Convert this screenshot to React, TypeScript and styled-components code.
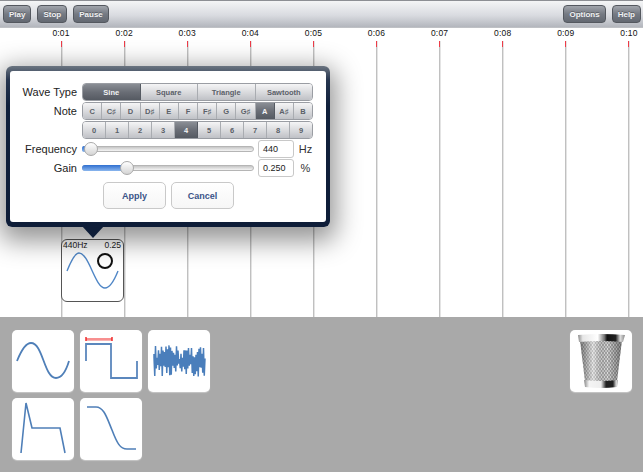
import React from "react"
import styled, { createGlobalStyle, css } from "styled-components"

const GlobalStyle = createGlobalStyle`
  html, body {
    margin: 0;
    padding: 0;
    background: #fff;
  }
  body {
    font-family: "Liberation Sans", Arial, sans-serif;
  }
`

const WAVES = ["Sine", "Square", "Triangle", "Sawtooth"]
const NOTES = ["C", "C♯", "D", "D♯", "E", "F", "F♯", "G", "G♯", "A", "A♯", "B"]
const OCTAVES = ["0", "1", "2", "3", "4", "5", "6", "7", "8", "9"]
const TIMES = ["0:01", "0:02", "0:03", "0:04", "0:05", "0:06", "0:07", "0:08", "0:09", "0:10"]

// noisy band for the third palette tile, fixed seed so the picture never changes
const noisePath = () => {
  let seed = 17
  const rnd = () => {
    seed = (seed * 9301 + 49297) % 233280
    return seed / 233280
  }
  let d = "M6 24"
  let top = true
  for (let x = 6; x <= 57; x += 0.75) {
    const y = top ? 15 + rnd() * 14 : 33 + rnd() * 14
    d += ` L${x.toFixed(2)} ${y.toFixed(1)}`
    top = !top
  }
  return d
}

const TrashIcon = () => (
  <svg width="50" height="56" viewBox="0 0 50 56">
    <defs>
      <linearGradient id="rim" x1="0" x2="1" y1="0" y2="0">
        <stop offset="0" stopColor="#8a8a8a" />
        <stop offset="0.1" stopColor="#e6e6e6" />
        <stop offset="0.42" stopColor="#fff" />
        <stop offset="0.56" stopColor="#777" />
        <stop offset="0.62" stopColor="#111" />
        <stop offset="0.8" stopColor="#222" />
        <stop offset="0.9" stopColor="#ddd" />
        <stop offset="1" stopColor="#888" />
      </linearGradient>
      <linearGradient id="foot" x1="0" x2="1" y1="0" y2="0">
        <stop offset="0" stopColor="#888" />
        <stop offset="0.15" stopColor="#f4f4f4" />
        <stop offset="0.5" stopColor="#eee" />
        <stop offset="0.65" stopColor="#222" />
        <stop offset="0.85" stopColor="#222" />
        <stop offset="0.95" stopColor="#ddd" />
        <stop offset="1" stopColor="#999" />
      </linearGradient>
      <linearGradient id="shade" x1="0" x2="1" y1="0" y2="0">
        <stop offset="0" stopColor="#000" stopOpacity="0.4" />
        <stop offset="0.32" stopColor="#fff" stopOpacity="0.4" />
        <stop offset="0.65" stopColor="#000" stopOpacity="0.02" />
        <stop offset="1" stopColor="#000" stopOpacity="0.4" />
      </linearGradient>
      <pattern id="mesh" width="3" height="4" patternUnits="userSpaceOnUse">
        <rect width="3" height="4" fill="#e2e2e2" />
        <path d="M0 0 L3 4 M3 0 L0 4" stroke="#808080" strokeWidth="0.7" />
      </pattern>
    </defs>
    <path d="M4 7 L46 7 L41 48 L9 48 Z" fill="url(#mesh)" />
    <path d="M4 7 L46 7 L41 48 L9 48 Z" fill="url(#shade)" />
    <path d="M2 2 Q25 0 49 2 L47 9 Q25 7 3 9 Z" fill="url(#rim)" />
    <path d="M8 47 Q25 49 42 47 L41 54 Q25 56 9 54 Z" fill="url(#foot)" />
  </svg>
)

export default function App() {
  return (
    <>
      <GlobalStyle />
      <Page>
        <Toolbar>
          <ToolGroup>
            <ToolButton>Play</ToolButton>
            <ToolButton>Stop</ToolButton>
            <ToolButton>Pause</ToolButton>
          </ToolGroup>
          <ToolGroup>
            <ToolButton>Options</ToolButton>
            <ToolButton>Help</ToolButton>
          </ToolGroup>
        </Toolbar>

        <Timeline>
          {TIMES.map((t) => (
            <Tick key={t}>
              <TickLabel>{t}</TickLabel>
              <TickLine />
            </Tick>
          ))}

          <Clip>
            <ClipHead>
              <span>440Hz</span>
              <span>0.25</span>
            </ClipHead>
            <ClipWave width="60" height="46" viewBox="0 0 60 46">
              <path d="M5 20 C 9 10 13 2 17 2 C 27 2 33 37 43 37 C 48 37 52 30 56 20" fill="none" stroke="#4f86c6" strokeWidth="1.4" />
            </ClipWave>
            <ClipHandle />
          </Clip>

          <Popover>
            <PopoverBody>
              <FormRow>
                <RowLabel>Wave Type</RowLabel>
                <Segments>
                  {WAVES.map((w) => (
                    <Segment key={w} $selected={w === "Sine"}>{w}</Segment>
                  ))}
                </Segments>
              </FormRow>
              <FormRow>
                <RowLabel>Note</RowLabel>
                <Segments>
                  {NOTES.map((n) => (
                    <Segment key={n} $selected={n === "A"}>{n}</Segment>
                  ))}
                </Segments>
              </FormRow>
              <FormRow>
                <RowLabel />
                <Segments>
                  {OCTAVES.map((o) => (
                    <Segment key={o} $selected={o === "4"}>{o}</Segment>
                  ))}
                </Segments>
              </FormRow>
              <FormRow>
                <RowLabel>Frequency</RowLabel>
                <Slider>
                  <SliderFill style={{ width: 4 }} />
                  <SliderKnob style={{ left: 1 }} />
                </Slider>
                <ValueBox>440</ValueBox>
                <Unit>Hz</Unit>
              </FormRow>
              <FormRow>
                <RowLabel>Gain</RowLabel>
                <Slider>
                  <SliderFill style={{ width: 42 }} />
                  <SliderKnob style={{ left: 37 }} />
                </Slider>
                <ValueBox>0.250</ValueBox>
                <Unit>%</Unit>
              </FormRow>
              <Actions>
                <ActionButton>Apply</ActionButton>
                <ActionButton>Cancel</ActionButton>
              </Actions>
            </PopoverBody>
            <Arrow />
          </Popover>
        </Timeline>

        <Palette>
          <PaletteGrid>
            <Tile>
              <TileArt viewBox="0 0 62 62">
                <path d="M5 31 C 9 21 14 13 19 13 C 31 13 32 48 44 48 C 50 48 54 41 57 31" fill="none" stroke="#4f7fb8" strokeWidth="1.8" />
              </TileArt>
            </Tile>
            <Tile>
              <TileArt viewBox="0 0 62 62">
                <path d="M6 31 V14 H31 V48 H57 V31" fill="none" stroke="#5b87bd" strokeWidth="1.8" />
                <path d="M6 10.5 H32" stroke="#f8b4b4" strokeWidth="1" />
                <path d="M6 9 H32" stroke="#f02020" strokeWidth="1" />
                <path d="M6 7 V11 M32 7 V11" stroke="#f02020" strokeWidth="1.4" />
              </TileArt>
            </Tile>
            <Tile>
              <TileArt viewBox="0 0 62 62">
                <path d={noisePath()} fill="none" stroke="#4a7ebb" strokeWidth="1.5" />
              </TileArt>
            </Tile>
            <Tile>
              <TileArt viewBox="0 0 62 62">
                <path d="M9 55 L14 5 L20 30 H48 L53 55" fill="none" stroke="#4f7fb8" strokeWidth="1.6" />
              </TileArt>
            </Tile>
            <Tile>
              <TileArt viewBox="0 0 62 62">
                <path d="M7 9 H16 C 24 9 27 20 32 32 C 37 45 40 51 47 51 H56" fill="none" stroke="#4f7fb8" strokeWidth="1.6" />
              </TileArt>
            </Tile>
          </PaletteGrid>
          <Tile>
            <TrashIcon />
          </Tile>
        </Palette>
      </Page>
    </>
  )
}

const Page = styled.div`
  width: 643px;
  height: 472px;
  display: flex;
  flex-direction: column;
  overflow: hidden;
`

const Toolbar = styled.div`
  height: 28px;
  flex: none;
  box-sizing: border-box;
  display: flex;
  justify-content: space-between;
  align-items: center;
  padding: 0 2px 0 3px;
  border-top: 1px solid #8d8f94;
  border-bottom: 1px solid #bfc1c5;
  background: linear-gradient(#f4f5f6, #d9dbe0 55%, #b3b6bd);
`

const ToolGroup = styled.div`
  display: flex;
  gap: 6px;
`

const ToolButton = styled.button`
  height: 18px;
  padding: 0 5px;
  border: 1px solid #54585f;
  border-radius: 4px;
  background: linear-gradient(#a1a5ac, #757a83 50%, #636871);
  color: #f0f1f3;
  font: bold 8px "Liberation Sans", Arial, sans-serif;
  text-shadow: 0 -1px 0 rgba(0, 0, 0, 0.3);
`

const Timeline = styled.div`
  position: relative;
  flex: 1;
  display: flex;
  padding-left: 29.5px;
  background: #fff;
`

const Tick = styled.div`
  flex: none;
  width: 63.1px;
  display: flex;
  flex-direction: column;
  align-items: center;
`

const TickLabel = styled.div`
  height: 13px;
  font: 8.5px/11px "Liberation Sans", Arial, sans-serif;
  letter-spacing: 0.2px;
  color: #111;
`

const TickLine = styled.div`
  flex: 1;
  width: 1px;
  background: linear-gradient(#ee3b47 0, #ee3b47 6px, #c0c0c0 6px);
  box-shadow: 1px 0 0 #e4e4e4;
`

const Popover = styled.div`
  position: absolute;
  left: 6px;
  top: 38px;
  width: 324px;
  height: 161px;
  box-sizing: border-box;
  padding: 5px 4px;
  border-radius: 6px;
  background: linear-gradient(#6b7580, #27364f 14px, #10203b 40px, #0e1d38);
  box-shadow: 0 8px 26px 6px rgba(0, 0, 0, 0.42);
`

const Arrow = styled.div`
  position: absolute;
  left: 76px;
  top: 160px;
  width: 0;
  height: 0;
  border-left: 11.5px solid transparent;
  border-right: 11.5px solid transparent;
  border-top: 12px solid #0e1d38;
`

const PopoverBody = styled.div`
  height: 100%;
  box-sizing: border-box;
  padding: 12px 13px 0 0;
  border-radius: 3px;
  background: #fff;
  display: flex;
  flex-direction: column;
  gap: 1px;
`

const FormRow = styled.div`
  display: flex;
  align-items: center;
  height: 18px;
`

const RowLabel = styled.div`
  flex: none;
  width: 67px;
  margin-right: 5px;
  text-align: right;
  font-size: 11px;
  color: #222;
`

const Segments = styled.div`
  flex: 1;
  height: 18px;
  display: flex;
  overflow: hidden;
  border: 1px solid #9a9da3;
  border-radius: 4px;
  box-sizing: border-box;
`

const Segment = styled.div<{ $selected?: boolean }>`
  flex: 1 1 0;
  display: flex;
  align-items: center;
  justify-content: center;
  font-size: 7.5px;
  font-weight: bold;
  color: #5a6068;
  background: linear-gradient(#f5f5f6, #d8d9dc 55%, #bfc1c6);
  border-right: 1px solid #a9acb1;
  &:last-child {
    border-right: 0;
  }
  ${(p) =>
    p.$selected &&
    css`
      color: #f2f3f4;
      background: linear-gradient(#8a8e95, #6a6e76 50%, #555a62);
      border-right-color: #555a62;
    `}
`

const Slider = styled.div`
  position: relative;
  flex: none;
  width: 172px;
  height: 6px;
  margin-right: 4px;
  border: 1px solid #b5b5b5;
  border-radius: 3px;
  background: linear-gradient(#c6c6c6, #f4f4f4);
  box-sizing: border-box;
`

const SliderFill = styled.div`
  position: absolute;
  left: -1px;
  top: -1px;
  height: 6px;
  border-radius: 3px;
  background: linear-gradient(#2f6fd0, #8ab6ee);
`

const SliderKnob = styled.div`
  position: absolute;
  top: -5px;
  width: 14px;
  height: 14px;
  box-sizing: border-box;
  border-radius: 50%;
  border: 1px solid #aaa;
  background: linear-gradient(#fff, #d4d4d4);
`

const ValueBox = styled.div`
  flex: none;
  width: 36px;
  height: 18px;
  box-sizing: border-box;
  padding-left: 4px;
  border: 1px solid #c8c8c8;
  border-radius: 3px;
  font-size: 9px;
  line-height: 16px;
  color: #222;
  background: #fff;
`

const Unit = styled.div`
  flex: 1;
  padding-left: 4px;
  text-align: center;
  font-size: 11px;
  color: #333;
`

const Actions = styled.div`
  display: flex;
  gap: 5px;
  margin-top: 4px;
  padding-left: 93px;
`

const ActionButton = styled.button`
  width: 63px;
  height: 27px;
  padding: 0;
  border: 1px solid #c9c9c9;
  border-radius: 5px;
  background: linear-gradient(#fff, #f6f6f6);
  color: #3a5488;
  font: bold 9px "Liberation Sans", Arial, sans-serif;
`

const Clip = styled.div`
  position: absolute;
  left: 61px;
  top: 211px;
  width: 63px;
  height: 63px;
  box-sizing: border-box;
  border: 1px solid #555;
  border-radius: 6px;
  background: #fff;
`

const ClipHead = styled.div`
  display: flex;
  justify-content: space-between;
  padding: 1px 2px 0 1px;
  font-size: 8.5px;
  line-height: 9px;
  color: #222;
`

const ClipWave = styled.svg`
  display: block;
  margin-top: 1px;
`

const ClipHandle = styled.div`
  position: absolute;
  left: 35px;
  top: 13px;
  width: 16px;
  height: 16px;
  box-sizing: border-box;
  border: 2px solid #111;
  border-radius: 50%;
  background: #fff;
`

const Palette = styled.div`
  height: 155px;
  flex: none;
  box-sizing: border-box;
  display: flex;
  justify-content: space-between;
  align-items: flex-start;
  padding: 13px 11px 0 12px;
  background: #a9a9a9;
`

const PaletteGrid = styled.div`
  display: grid;
  grid-template-columns: repeat(3, 62px);
  grid-auto-rows: 62px;
  gap: 6px;
`

const Tile = styled.div`
  width: 62px;
  height: 62px;
  display: flex;
  align-items: center;
  justify-content: center;
  border-radius: 5px;
  background: #fff;
  box-shadow: 0 1px 1px #c6c6c6;
`

const TileArt = styled.svg`
  width: 62px;
  height: 62px;
`
